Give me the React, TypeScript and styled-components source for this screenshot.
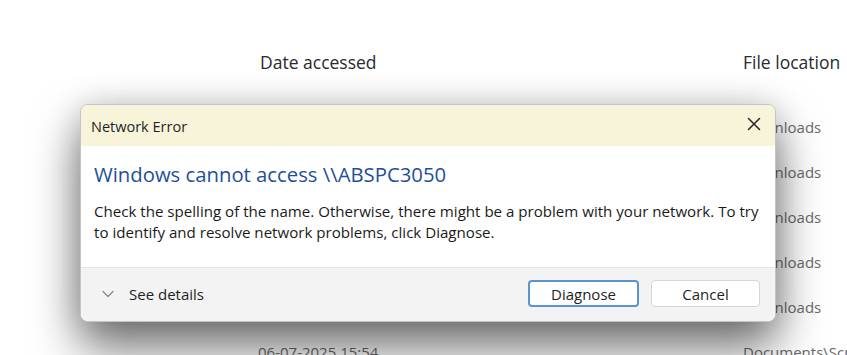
import React from 'react';
import styled, { createGlobalStyle } from 'styled-components';

const GlobalStyle = createGlobalStyle`
	html, body {
		margin: 0;
		padding: 0;
		background: #ffffff;
	}
	body {
		font-family: 'Open Sans', 'Noto Sans', 'Liberation Sans', sans-serif;
	}
`;

const rows = [
	{ date: '', location: 'Downloads' },
	{ date: '', location: 'Downloads' },
	{ date: '', location: 'Downloads' },
	{ date: '', location: 'Downloads' },
	{ date: '', location: 'Downloads' },
	{ date: '06-07-2025 15:54', location: 'Documents\\Screenshots' },
];

const App = () => {
	return (
		<>
			<GlobalStyle />
			<Screen>
				<Explorer>
					<HeaderRow>
						<HeaderCell>Date accessed</HeaderCell>
						<HeaderCell>File location</HeaderCell>
					</HeaderRow>
					<RowList>
						{rows.map((row, i) => (
							<FileRow key={i}>
								<Cell>{row.date}</Cell>
								<Cell>{row.location}</Cell>
							</FileRow>
						))}
					</RowList>
				</Explorer>

				<Dialog role="dialog" aria-label="Network Error">
					<TitleBar>
						<Title>Network Error</Title>
						<CloseButton aria-label="Close">
							<svg width="14" height="14" viewBox="0 0 14 14">
								<path d="M1.5 1.5 L12.5 12.5 M12.5 1.5 L1.5 12.5" stroke="#2b2b2b" strokeWidth="1.6" strokeLinecap="round" />
							</svg>
						</CloseButton>
					</TitleBar>
					<Content>
						<Heading>Windows cannot access \\ABSPC3050</Heading>
						<Message>
							Check the spelling of the name. Otherwise, there might be a problem with your network. To try to identify and resolve network problems, click Diagnose.
						</Message>
					</Content>
					<Footer>
						<Details>
							<svg width="14" height="14" viewBox="0 0 14 14">
								<path d="M2 4.5 L7 9.5 L12 4.5" fill="none" stroke="#8a8a8a" strokeWidth="1.3" strokeLinecap="round" strokeLinejoin="round" />
							</svg>
							<span>See details</span>
						</Details>
						<Buttons>
							<Button $primary>Diagnose</Button>
							<Button>Cancel</Button>
						</Buttons>
					</Footer>
				</Dialog>
			</Screen>
		</>
	);
};

const Screen = styled.div`
	position: relative;
	width: 847px;
	height: 355px;
	overflow: hidden;
	background: #ffffff;
`;

const Explorer = styled.div`
	display: flex;
	flex-direction: column;
	padding-top: 49px;
`;

const HeaderRow = styled.div`
	display: grid;
	grid-template-columns: 260px 483px 1fr;
	height: 26px;
	align-items: center;
	&::before {
		content: '';
	}
`;

const HeaderCell = styled.div`
	font-size: 17.5px;
	color: #2a2a2a;
	white-space: nowrap;
`;

const RowList = styled.div`
	display: flex;
	flex-direction: column;
	margin-top: 29px;
`;

const FileRow = styled.div`
	display: grid;
	grid-template-columns: 258px 485px 1fr;
	height: 45px;
	align-items: center;
	&::before {
		content: '';
	}
`;

const Cell = styled.div`
	font-size: 15px;
	color: #6a6a6a;
	white-space: nowrap;
`;

const Dialog = styled.div`
	position: absolute;
	left: 80px;
	top: 104px;
	width: 696px;
	height: 218px;
	display: flex;
	flex-direction: column;
	border: 1px solid #c4c4c4;
	border-radius: 8px;
	overflow: hidden;
	background: #ffffff;
	box-sizing: border-box;
	box-shadow: 0 26px 48px rgba(0, 0, 0, 0.55), 0 0 32px rgba(0, 0, 0, 0.16);
`;

const TitleBar = styled.div`
	height: 41px;
	display: flex;
	align-items: center;
	justify-content: space-between;
	padding: 0 14px 0 10px;
	background: #f8f4d9;
	flex-shrink: 0;
`;

const Title = styled.div`
	font-size: 14.5px;
	color: #1f1f1f;
	padding-top: 1px;
`;

const CloseButton = styled.button`
	border: none;
	background: transparent;
	padding: 0;
	display: flex;
	margin-top: -3px;
`;

const Content = styled.div`
	flex: 1;
	padding: 14px 10px 0 13px;
	display: flex;
	flex-direction: column;
	gap: 13px;
`;

const Heading = styled.div`
	font-size: 20.3px;
	color: #1f4e9c;
	line-height: 28px;
`;

const Message = styled.div`
	font-size: 15.1px;
	line-height: 21px;
	color: #1a1a1a;
`;

const Footer = styled.div`
	height: 54px;
	flex-shrink: 0;
	display: flex;
	align-items: center;
	justify-content: space-between;
	padding: 0 15px 2px 20px;
	background: #f3f3f3;
	border-top: 1px solid #e4e4e4;
	box-sizing: border-box;
`;

const Details = styled.div`
	display: flex;
	align-items: center;
	gap: 14px;
	font-size: 15px;
	color: #1f1f1f;
`;

const Buttons = styled.div`
	display: flex;
	gap: 12px;
`;

const Button = styled.button<{ $primary?: boolean }>`
	width: ${(p) => (p.$primary ? '111px' : '109px')};
	height: 27px;
	box-sizing: border-box;
	border-radius: 4px;
	background: #ffffff;
	border: ${(p) => (p.$primary ? '2px solid #5a95d0' : '1px solid #d6d6d6')};
	font-family: inherit;
	font-size: 15px;
	color: #1f1f1f;
	padding: 0;
`;

export default App;
